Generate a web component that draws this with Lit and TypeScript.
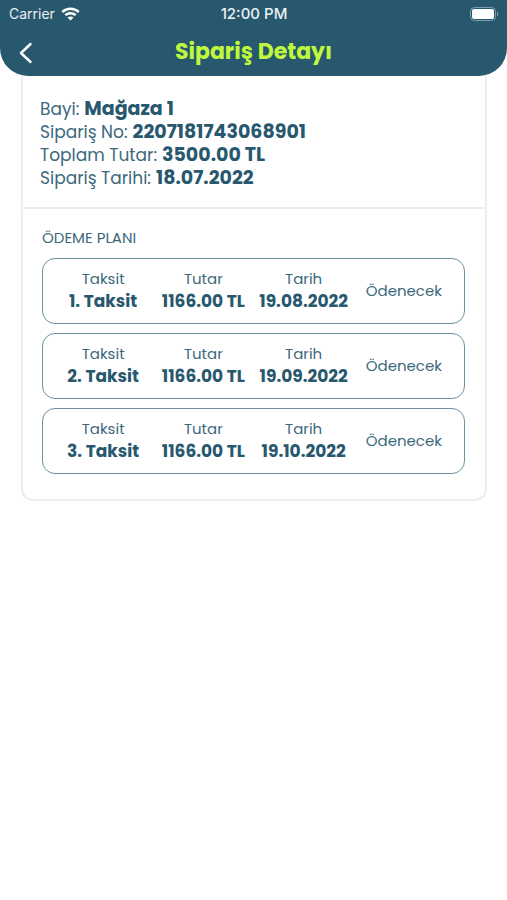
import { LitElement, html, css } from "lit";
import { customElement } from "lit/decorators.js";

interface Installment {
  name: string;
  amount: string;
  date: string;
  status: string;
}

const summary = [
  { label: "Bayi:", value: "Mağaza 1" },
  { label: "Sipariş No:", value: "2207181743068901" },
  { label: "Toplam Tutar:", value: "3500.00 TL" },
  { label: "Sipariş Tarihi:", value: "18.07.2022" },
];

const installments: Installment[] = [
  { name: "1. Taksit", amount: "1166.00 TL", date: "19.08.2022", status: "Ödenecek" },
  { name: "2. Taksit", amount: "1166.00 TL", date: "19.09.2022", status: "Ödenecek" },
  { name: "3. Taksit", amount: "1166.00 TL", date: "19.10.2022", status: "Ödenecek" },
];

@customElement("status-bar")
class StatusBar extends LitElement {
  static styles = css`
    :host {
      display: grid;
      grid-template-columns: 1fr auto 1fr;
      align-items: center;
      height: 27px;
      padding: 0 8px 0 9px;
      color: #e9f0f3;
      font: 500 15px/16px Inter, "Liberation Sans", sans-serif;
    }
    .carrier {
      display: flex;
      align-items: center;
      gap: 6px;
      font-size: 14px;
      font-weight: 400;
    }
    .battery {
      justify-self: end;
    }
    svg {
      display: block;
    }
  `;

  render() {
    return html`
      <div class="carrier">
        <span>Carrier</span>
        <svg width="19" height="14" viewBox="0 0 19 14" fill="none" stroke="#fff" stroke-width="2.5" aria-hidden="true">
          <path d="M1.200 5C5.800 .6 13.200 .6 17.800 5" />
          <path d="M4.300 8.200C7.200 5.500 11.800 5.500 14.700 8.200" />
          <path d="M9.500 13.600L6.500 10.600C8.200 9.100 10.800 9.100 12.500 10.600Z" fill="#fff" stroke="none" />
        </svg>
      </div>
      <span>12:00 PM</span>
      <svg class="battery" width="29" height="14" viewBox="0 0 29 14" aria-hidden="true">
        <rect x=".5" y=".5" width="25" height="13" rx="4" fill="none" stroke="#7f9dab" />
        <rect x="2" y="2" width="22" height="10" rx="2" fill="#fff" />
        <path d="M27 4.500C28.700 5.300 28.700 8.700 27 9.500Z" fill="#7f9dab" />
      </svg>
    `;
  }
}

@customElement("app-root")
class AppRoot extends LitElement {
  static styles = css`
    :host {
      display: block;
      min-height: 100vh;
      background: #fff;
      color: #28586e;
      font-family: Poppins, Inter, "Noto Sans", sans-serif;
    }
    .header {
      background: #28586e;
      border-radius: 0 0 28px 28px;
    }
    .nav {
      display: grid;
      grid-template-columns: 52px 1fr 52px;
      align-items: center;
      height: 49px;
    }
    .back {
      display: grid;
      place-items: center;
      height: 49px;
      padding: 2px 0 0;
      border: 0;
      background: none;
      cursor: pointer;
    }
    .title {
      margin: 0;
      color: #bff83c;
      font-size: 22px;
      line-height: 28px;
      font-weight: 700;
      text-align: center;
    }
    .card {
      margin: 0 20px 0 21px;
      border: 2px solid #ededee;
      border-top: 0;
      border-radius: 0 0 12px 12px;
    }
    .summary {
      padding: 21px 17px 18px;
      border-bottom: 2px solid #ededee;
    }
    .line {
      display: flex;
      align-items: baseline;
      gap: 5px;
      height: 23px;
      font-size: 17px;
      line-height: 23px;
    }
    .line .value {
      font-size: 19px;
    }
    dl,
    dd,
    dt {
      margin: 0;
    }
    dt,
    .status,
    .heading {
      color: #3c687c;
      font-weight: 400;
    }
    dd {
      font-weight: 700;
    }
    .plan {
      padding: 19px 20px 25px 19px;
    }
    .heading {
      margin: 0 0 10px;
      font-size: 15px;
      line-height: 20px;
    }
    .list {
      display: grid;
      gap: 9px;
      margin: 0;
      padding: 0;
      list-style: none;
    }
    .item {
      display: grid;
      grid-template-columns: 3fr 1fr;
      align-items: center;
      padding: 8px 10px 10px;
      border: 1px solid #6f92a2;
      border-radius: 13px;
      text-align: center;
      font-size: 15px;
      line-height: 23px;
    }
    .facts {
      display: grid;
      grid-template-columns: repeat(3, 1fr);
      white-space: nowrap;
    }
    .facts dd {
      font-size: 17px;
    }
  `;

  render() {
    return html`
      <header class="header">
        <status-bar></status-bar>
        <div class="nav">
          <button class="back" aria-label="Geri">
            <svg width="14" height="22" viewBox="0 0 14 22" fill="none" stroke="#fff" stroke-width="2.5" stroke-linecap="round" stroke-linejoin="round">
              <path d="M11.500 2L2 11L11.500 20" />
            </svg>
          </button>
          <h1 class="title">Sipariş Detayı</h1>
        </div>
      </header>
      <main class="card">
        <dl class="summary">
          ${summary.map(
            (row) => html`<div class="line"><dt>${row.label}</dt><dd class="value">${row.value}</dd></div>`
          )}
        </dl>
        <section class="plan">
          <h2 class="heading">ÖDEME PLANI</h2>
          <ul class="list">
            ${installments.map(
              (item) => html`
                <li class="item">
                  <dl class="facts">
                    <div><dt>Taksit</dt><dd>${item.name}</dd></div>
                    <div><dt>Tutar</dt><dd>${item.amount}</dd></div>
                    <div><dt>Tarih</dt><dd>${item.date}</dd></div>
                  </dl>
                  <span class="status">${item.status}</span>
                </li>
              `
            )}
          </ul>
        </section>
      </main>
    `;
  }
}
